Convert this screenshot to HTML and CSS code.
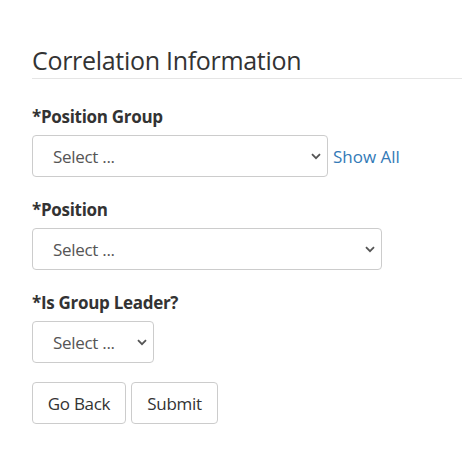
FILE: index.html
```html
<!DOCTYPE html>
<html>
<head>
<meta charset="utf-8">
<link rel="stylesheet" href="styles.css">
</head>
<body>
<div class="page">
  <h3 class="section-title">Correlation Information</h3>
  <div class="field">
    <label class="field-label">*Position Group</label>
    <div class="row">
      <div class="select-wrap w-group">
        <select class="select"><option>Select ...</option></select>
        <svg class="chev" width="10" height="7" viewBox="0 0 10 7"><path d="M1 1.2 L5 5.2 L9 1.2" fill="none" stroke="#555" stroke-width="1.8"/></svg>
      </div>
      <a class="link" href="#">Show All</a>
    </div>
  </div>
  <div class="field">
    <label class="field-label">*Position</label>
    <div class="select-wrap w-pos">
      <select class="select"><option>Select ...</option></select>
      <svg class="chev" width="10" height="7" viewBox="0 0 10 7"><path d="M1 1.2 L5 5.2 L9 1.2" fill="none" stroke="#555" stroke-width="1.8"/></svg>
    </div>
  </div>
  <div class="field">
    <label class="field-label">*Is Group Leader?</label>
    <div class="select-wrap w-leader">
      <select class="select"><option>Select ...</option></select>
      <svg class="chev" width="10" height="7" viewBox="0 0 10 7"><path d="M1 1.2 L5 5.2 L9 1.2" fill="none" stroke="#555" stroke-width="1.8"/></svg>
    </div>
  </div>
  <div class="actions">
    <button class="btn btn-back">Go Back</button>
    <button class="btn btn-submit">Submit</button>
  </div>
</div>
</body>
</html>
```

FILE: styles.css
```css
html, body {
  margin: 0;
  padding: 0;
  background: #fff;
}
body {
  font-family: "Open Sans", "Noto Sans", sans-serif;
  color: #333;
}
.page {
  padding: 44px 0 0 32px;
}
.section-title {
  margin: 0;
  font-size: 25px;
  font-weight: 400;
  line-height: 32px;
  color: #333;
  padding-bottom: 2px;
  border-bottom: 1px solid #e5e5e5;
  letter-spacing: -0.3px;
}
.field {
  margin-top: 27px;
}
.field + .field {
  margin-top: 22px;
}
.field-label {
  display: block;
  font-size: 17px;
  font-weight: 700;
  line-height: 22px;
  margin-bottom: 7px;
  color: #333;
  letter-spacing: -0.3px;
}
.row {
  display: flex;
  align-items: center;
  gap: 5px;
}
.select-wrap {
  position: relative;
  height: 42px;
}
.w-group { width: 296px; }
.w-pos { width: 350px; }
.w-leader { width: 122px; }
.select {
  appearance: none;
  -webkit-appearance: none;
  width: 100%;
  height: 100%;
  box-sizing: border-box;
  border: 1px solid #ccc;
  border-radius: 4px;
  background: #fff;
  padding: 0 0 0 20px;
  font-family: inherit;
  font-size: 17px;
  color: #555;
  letter-spacing: -0.3px;
}
.chev {
  position: absolute;
  right: 7px;
  top: 18px;
}
.link {
  color: #337ab7;
  text-decoration: none;
  font-size: 17px;
}
.actions {
  display: flex;
  gap: 5px;
  margin-top: 19px;
}
.btn {
  height: 42px;
  box-sizing: border-box;
  border: 1px solid #ccc;
  border-radius: 4px;
  background: #fff;
  font-family: inherit;
  font-size: 17px;
  color: #333;
  padding: 0;
  letter-spacing: -0.3px;
}
.btn-back { width: 94px; }
.btn-submit { width: 87px; }
```
